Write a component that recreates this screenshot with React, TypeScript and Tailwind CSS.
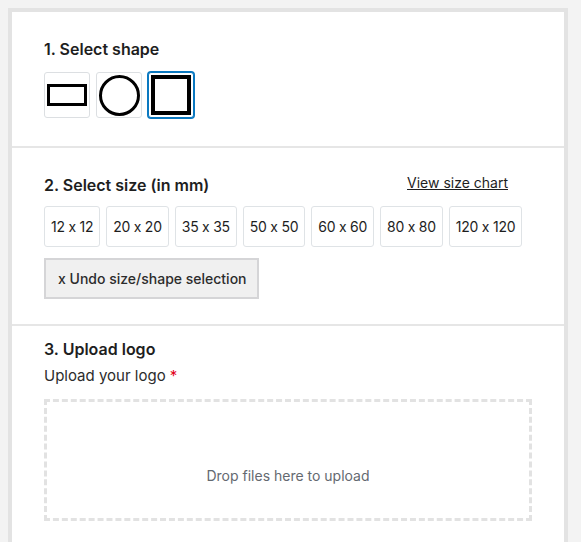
import React from 'react';

const sizes = ['12 x 12', '20 x 20', '35 x 35', '50 x 50', '60 x 60', '80 x 80', '120 x 120'];

function ShapeButton({ selected, children }: { selected?: boolean; children: React.ReactNode }) {
  return (
    <button
      className={
        'flex h-[46px] w-[46px] items-center justify-center rounded-[3px] border bg-white ' +
        (selected ? 'border-[#0a78c0] ring-1 ring-[#0a78c0]' : 'border-[#dcdfe2]')
      }
    >
      {children}
    </button>
  );
}

export default function App() {
  return (
    <div className="min-h-screen bg-[#f3f3f3] pl-2 pt-2 font-['Inter',sans-serif] text-[#1e1e1e]">
      <div className="w-[560px] border-4 border-b-0 border-[#e3e3e3] bg-white">
        {/* 1. shape */}
        <section className="border-b-2 border-[#e6e6e6] px-8 pb-[28px] pt-[25px]">
          <h2 className="text-base font-semibold leading-6">1. Select shape</h2>
          <div className="mt-[11px] flex gap-[6px]">
            <ShapeButton>
              <svg width="40" height="22" viewBox="0 0 40 22">
                <rect x="1.5" y="1.5" width="37" height="19" fill="none" stroke="#000" strokeWidth="3" />
              </svg>
            </ShapeButton>
            <ShapeButton>
              <svg width="41" height="41" viewBox="0 0 41 41">
                <circle cx="20.5" cy="20.5" r="19" fill="none" stroke="#000" strokeWidth="3" />
              </svg>
            </ShapeButton>
            <ShapeButton selected>
              <svg width="40" height="40" viewBox="0 0 40 40">
                <rect x="2" y="2" width="36" height="36" fill="none" stroke="#000" strokeWidth="4" />
              </svg>
            </ShapeButton>
          </div>
        </section>

        {/* 2. size */}
        <section className="border-b-2 border-[#e6e6e6] px-8 pb-[25px] pt-[25px]">
          <div className="flex w-[464px] items-start justify-between">
            <h2 className="text-base font-semibold leading-6">2. Select size (in mm)</h2>
            <a href="#" className="text-sm leading-5 text-[#1e1e1e] underline">
              View size chart
            </a>
          </div>
          <div className="mt-[9px] flex gap-[6px]">
            {sizes.map((s) => (
              <button
                key={s}
                className="h-[41px] shrink-0 whitespace-nowrap rounded-[3px] border border-[#dfe3e6] bg-white px-[6px] text-sm tracking-[-0.25px] text-[#1e1e1e]"
              >
                {s}
              </button>
            ))}
          </div>
          <button className="mt-[11px] h-[41px] w-[215px] border-2 border-[#d5d5d7] bg-[#f0f0f0] pl-3 text-left text-sm font-medium text-[#2c2c2c]">
            x Undo size/shape selection
          </button>
        </section>

        {/* 3. upload */}
        <section className="px-8 pb-8 pt-[11px]">
          <h2 className="text-base font-semibold leading-6">3. Upload logo</h2>
          <p className="mt-[3px] text-[15px] leading-6 text-[#2c2c2c]">
            Upload your logo <span className="text-[#e2001a]">*</span>
          </p>
          <div className="mt-[11px] h-[122px] border-[3px] border-dashed border-[#e2e2e2] pt-16 text-center text-sm leading-5 text-[#646970]">
            Drop files here to upload
          </div>
        </section>
      </div>
    </div>
  );
}
